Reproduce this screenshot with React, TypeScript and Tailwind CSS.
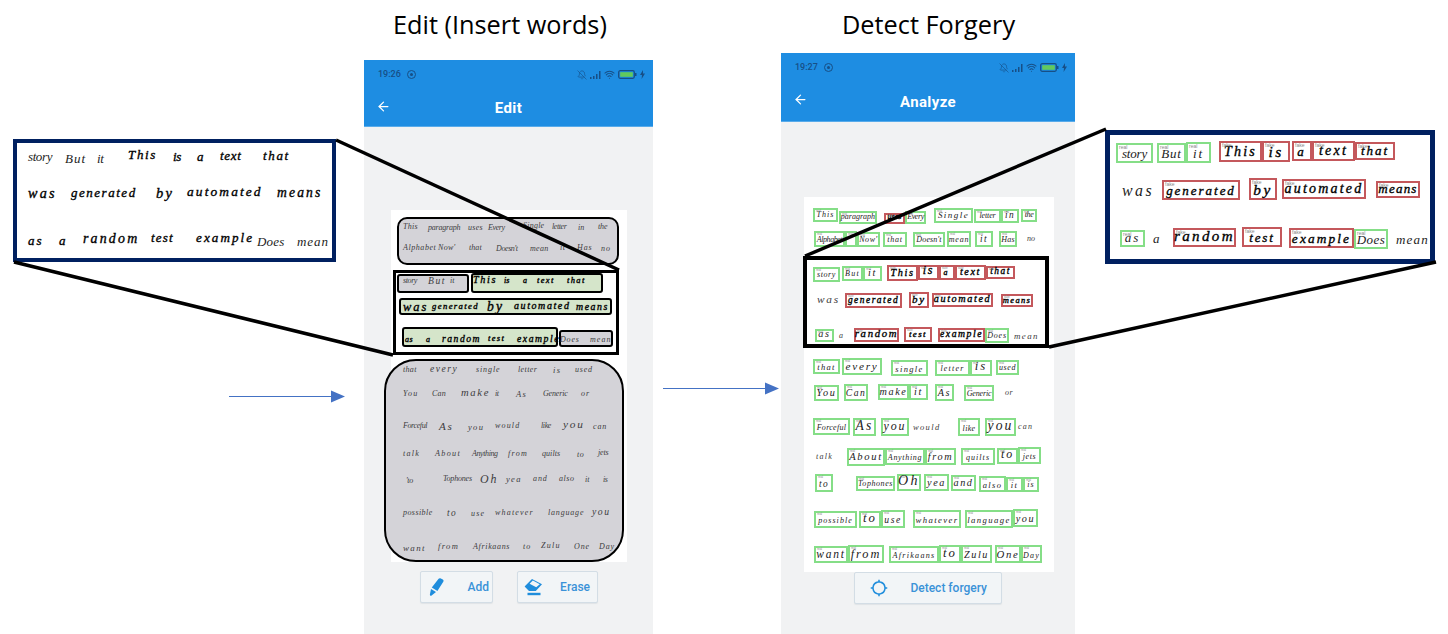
import { ArrowLeft, BellOff, Wifi } from "lucide-react";
import { MdGpsNotFixed } from "react-icons/md";

// text, left, right, centre y
type Plain = [string, number, number, number];
// text, left, right, top, bottom, state of the box
type Boxed = [string, number, number, number, number, "real" | "fake"];

const hand = "font-['Liberation_Serif',serif] italic";

const editTop: Plain[] = [
  ["This", 403, 418, 227], ["paragraph", 428, 457, 228], ["uses", 468, 483, 228], ["Every", 488, 502, 228],
  ["Single", 523, 545, 226], ["letter", 552, 570, 227], ["in", 578, 585, 228], ["the", 598, 608, 227],
  ["Alphabet", 403, 435, 248], ["Now'", 438, 453, 248], ["that", 469, 483, 248], ["Doesn't", 496, 517, 249],
  ["mean", 530, 545, 249], ["it", 560, 568, 248], ["Has", 577, 590, 248], ["no", 601, 610, 249],
];
const editReal: Plain[] = [
  ["story", 403, 415, 281], ["But", 428, 445, 281], ["it", 450, 457, 281], ["Does", 560, 577, 340], ["mean", 590, 608, 340],
];
const editFake: Plain[] = [
  ["This", 473, 497, 280], ["is", 504, 511, 281], ["a", 523, 530, 281], ["text", 537, 557, 280], ["that", 567, 587, 280],
  ["was", 403, 425, 307], ["generated", 432, 478, 306], ["by", 487, 503, 307], ["automated", 514, 567, 306], ["means", 576, 605, 307],
  ["as", 405, 413, 340], ["a", 426, 432, 340], ["random", 442, 476, 339], ["test", 488, 508, 338], ["example", 517, 557, 339],
];
const editBottom: Plain[] = [
  ["that", 403, 418, 370], ["every", 430, 458, 370], ["single", 476, 502, 370], ["letter", 518, 541, 370], ["is", 553, 563, 370], ["used", 575, 592, 370],
  ["You", 403, 417, 394], ["Can", 432, 443, 394], ["make", 461, 486, 393], ["it", 495, 500, 394], ["As", 516, 526, 394], ["Generic", 543, 566, 394], ["or", 581, 590, 394],
  ["Forceful", 403, 427, 426], ["As", 439, 452, 427], ["you", 468, 483, 427], ["would", 495, 518, 426], ["like", 541, 550, 426], ["you", 563, 583, 425], ["can", 593, 606, 427],
  ["talk", 403, 422, 454], ["About", 435, 459, 454], ["Anything", 472, 496, 454], ["from", 508, 527, 454], ["quilts", 542, 563, 454], ["to", 577, 585, 455], ["jets", 598, 611, 453],
  ["'to", 406, 415, 481], ["Tophones", 443, 469, 479], ["Oh", 480, 494, 480], ["yea", 506, 521, 479], ["and", 533, 546, 479], ["also", 559, 575, 479], ["it", 585, 592, 480], ["is", 603, 609, 480],
  ["possible", 403, 434, 513], ["to", 447, 458, 514], ["use", 471, 485, 514], ["whatever", 495, 532, 513], ["language", 548, 582, 513], ["you", 592, 609, 512],
  ["want", 403, 424, 548], ["from", 438, 458, 546], ["Afrikaans", 473, 510, 547], ["to", 523, 532, 547], ["Zulu", 541, 560, 546], ["One", 574, 587, 547], ["Day", 599, 612, 547],
];

const detectPlain: Plain[] = [
  ["no", 1027, 1034, 239], ["was", 817, 837, 300], ["a", 839, 845, 336], ["mean", 1014, 1035, 336], ["or", 1005, 1013, 393],
  ["would", 913, 938, 427], ["can", 1018, 1032, 427], ["talk", 816, 835, 457],
];
const detectBoxes: Boxed[] = [
  ["This", 813, 838, 208, 222, "real"], ["paragraph", 839, 877, 211, 224, "real"], ["uses", 884, 905, 213, 224, "fake"], ["Every", 905, 926, 211, 224, "real"],
  ["Single", 934, 973, 208, 223, "real"], ["letter", 974, 1001, 209, 223, "real"], ["in", 1001, 1019, 209, 223, "real"], ["the", 1021, 1037, 209, 222, "real"],
  ["Alphabet", 814, 845, 231, 247, "real"], ["'", 845, 857, 231, 247, "real"], ["Now'", 857, 880, 232, 247, "real"], ["that", 883, 907, 232, 247, "real"],
  ["Doesn't", 913, 945, 232, 247, "real"], ["mean", 947, 971, 231, 247, "real"], ["it", 975, 993, 231, 247, "real"], ["Has", 999, 1017, 231, 247, "real"],
  ["story", 813, 840, 267, 282, "real"], ["But", 842, 863, 266, 281, "real"], ["it", 863, 882, 266, 281, "real"],
  ["This", 887, 918, 265, 281, "fake"], ["is", 918, 939, 265, 280, "fake"], ["a", 939, 955, 265, 280, "fake"], ["text", 955, 986, 265, 280, "fake"], ["that", 986, 1015, 266, 279, "fake"],
  ["generated", 845, 902, 293, 308, "fake"], ["by", 909, 929, 292, 308, "fake"], ["automated", 932, 993, 293, 307, "fake"], ["means", 1001, 1033, 294, 307, "fake"],
  ["as", 815, 834, 329, 342, "real"], ["random", 854, 899, 328, 342, "fake"], ["test", 904, 932, 327, 342, "fake"], ["example", 938, 985, 328, 342, "fake"], ["Does", 985, 1009, 328, 343, "real"],
  ["that", 813, 840, 359, 374, "real"], ["every", 842, 882, 358, 375, "real"], ["single", 891, 928, 360, 376, "real"], ["letter", 935, 970, 360, 376, "real"], ["is", 970, 992, 360, 376, "real"], ["used", 996, 1019, 360, 375, "real"],
  ["You", 814, 839, 385, 401, "real"], ["Can", 844, 868, 384, 401, "real"], ["make", 878, 909, 384, 400, "real"], ["it", 909, 928, 384, 400, "real"], ["As", 935, 954, 384, 401, "real"], ["Generic", 964, 994, 385, 401, "real"],
  ["Forceful", 813, 850, 418, 435, "real"], ["As", 853, 876, 418, 436, "real"], ["you", 881, 909, 418, 436, "real"], ["like", 958, 980, 418, 436, "real"], ["you", 985, 1016, 418, 436, "real"],
  ["About", 847, 885, 448, 466, "real"], ["Anything", 885, 925, 448, 465, "real"], ["from", 925, 956, 448, 465, "real"], ["quilts", 961, 995, 448, 465, "real"], ["to", 997, 1018, 448, 464, "real"], ["jets", 1018, 1041, 447, 464, "real"],
  ["to", 815, 833, 474, 492, "real"], ["Tophones", 856, 895, 476, 491, "real"], ["Oh", 897, 921, 474, 491, "real"], ["yea", 924, 949, 474, 491, "real"], ["and", 951, 976, 475, 491, "real"], ["also", 979, 1006, 476, 492, "real"], ["it", 1006, 1023, 477, 492, "real"], ["is", 1023, 1039, 477, 492, "real"],
  ["possible", 814, 857, 511, 528, "real"], ["to", 859, 881, 511, 528, "real"], ["use", 881, 905, 510, 528, "real"], ["whatever", 913, 961, 510, 528, "real"], ["language", 965, 1013, 510, 528, "real"], ["you", 1013, 1038, 509, 527, "real"],
  ["want", 814, 848, 546, 563, "real"], ["from", 848, 884, 545, 563, "real"], ["Afrikaans", 889, 939, 546, 563, "real"], ["to", 939, 961, 545, 563, "real"], ["Zulu", 961, 992, 545, 563, "real"], ["One", 995, 1021, 545, 563, "real"], ["Day", 1021, 1042, 545, 563, "real"],
];

const leftInsetReal: Plain[] = [
  ["story", 28, 48, 156], ["But", 65, 85, 158], ["it", 97, 105, 158], ["Does", 257, 280, 241], ["mean", 297, 323, 241],
];
const leftInsetFake: Plain[] = [
  ["This", 128, 157, 154], ["is", 173, 183, 156], ["a", 197, 205, 156], ["text", 220, 245, 155], ["that", 263, 292, 155],
  ["was", 28, 53, 193], ["generated", 71, 135, 192], ["by", 156, 173, 193], ["automated", 187, 258, 192], ["means", 277, 317, 193],
  ["as", 28, 43, 240], ["a", 59, 68, 240], ["random", 83, 132, 239], ["test", 151, 178, 237], ["example", 196, 250, 238],
];

const rightInsetBoxes: Boxed[] = [
  ["story", 1116, 1153, 143, 163, "real"], ["But", 1157, 1186, 143, 163, "real"], ["it", 1186, 1211, 142, 163, "real"],
  ["This", 1219, 1262, 141, 162, "fake"], ["is", 1262, 1290, 141, 162, "fake"], ["a", 1292, 1312, 141, 161, "fake"], ["text", 1312, 1355, 141, 161, "fake"], ["that", 1355, 1395, 142, 160, "fake"],
  ["generated", 1162, 1240, 180, 200, "fake"], ["by", 1249, 1277, 178, 200, "fake"], ["automated", 1282, 1366, 179, 199, "fake"], ["means", 1376, 1420, 181, 198, "fake"],
  ["as", 1120, 1145, 230, 247, "real"], ["random", 1173, 1236, 228, 247, "fake"], ["test", 1242, 1282, 227, 247, "fake"], ["example", 1289, 1354, 228, 248, "fake"], ["Does", 1354, 1388, 229, 249, "real"],
];
const rightInsetPlain: Plain[] = [
  ["was", 1122, 1150, 191], ["a", 1153, 1162, 238], ["mean", 1396, 1423, 239],
];

const clamp = (v: number, lo: number, hi: number) => Math.max(lo, Math.min(hi, v));

// font size and tracking are worked out from the width the word has in the scan
const fit = (text: string, w: number, min: number, max: number) => {
  const fontSize = clamp((w / Math.max(text.length, 2)) * 1.7, min, max);
  const letterSpacing = clamp((w - 0.43 * fontSize * text.length) / text.length, -0.4, 3);
  return { fontSize, letterSpacing };
};

const inked = "[-webkit-text-stroke:0.35px_black] text-black";

const Word = ({ item, bold, faint, large }: { item: Plain; bold?: boolean; faint?: boolean; large?: boolean }) => {
  const [text, x1, x2, y] = item;
  return (
    <span
      className={`absolute -translate-y-1/2 leading-none whitespace-nowrap ${hand} ${bold ? inked : faint ? "text-[#3c3c40]" : "text-[#1c1c1c]"}`}
      style={{ left: x1, top: y, ...fit(text, x2 - x1, large ? 13 : 8, large ? 16 : 15) }}
    >
      {text}
    </span>
  );
};

const BoxedWord = ({ item, large }: { item: Boxed; large?: boolean }) => {
  const [text, x1, x2, y1, y2, state] = item;
  const fake = state === "fake";
  const pad = large ? 10 : 7;
  return (
    <div
      className={`absolute flex items-end justify-center border-2 pb-px ${fake ? "border-[#c4585c]" : "border-[#85de87]"}`}
      style={{ left: x1, top: y1, width: x2 - x1, height: y2 - y1 }}
    >
      <span className={`absolute left-px top-0 leading-none text-[#888] font-['Liberation_Sans',sans-serif] ${large ? "text-[5px]" : "text-[3px]"}`}>
        {state}
      </span>
      <span
        className={`leading-none whitespace-nowrap ${hand} ${fake ? inked : "text-[#1c1c1c]"}`}
        style={fit(text, x2 - x1 - pad, large ? 13 : 8, large ? 16 : 14)}
      >
        {text}
      </span>
    </div>
  );
};

const StatusBar = ({ time }: { time: string }) => (
  <div className="flex h-[25px] items-center justify-between pl-3.5 pr-2 pt-1 text-[#174f86]">
    <div className="flex items-center gap-1.5 font-['Roboto',sans-serif] text-[9px] font-medium">
      {time}
      <span className="flex size-[9px] items-center justify-center rounded-full border-[1.5px] border-[#174f86]">
        <span className="size-[3px] rounded-full bg-[#174f86]" />
      </span>
    </div>
    <div className="flex items-center gap-[3px]">
      <BellOff size={10} strokeWidth={1.5} />
      <svg width="11" height="8" viewBox="0 0 11 8" fill="currentColor">
        <rect x="0" y="6" width="1.5" height="2" />
        <rect x="3" y="5" width="1.5" height="3" />
        <rect x="6" y="3" width="1.5" height="5" />
        <rect x="9" y="0" width="1.5" height="8" />
      </svg>
      <Wifi size={11} strokeWidth={2.2} />
      <svg width="19" height="9" viewBox="0 0 19 9">
        <rect x="0.7" y="0.7" width="15.6" height="7.6" rx="1.5" fill="none" stroke="#174f86" strokeWidth="1.3" />
        <rect x="2.2" y="2.2" width="12.6" height="4.6" fill="#62c95d" />
        <rect x="17" y="3" width="1.5" height="3" fill="#174f86" />
      </svg>
      <svg width="5" height="9" viewBox="0 0 5 9" fill="currentColor">
        <path d="M3 0 0 5h2L1.6 9 5 3.6H3z" />
      </svg>
    </div>
  </div>
);

const Phone = ({ title, time, bar, children, className }: { title: string; time: string; bar: string; children: React.ReactNode; className: string }) => (
  <section className={`absolute flex flex-col bg-[#f1f2f3] ${className}`}>
    <header className="bg-[#1e8de2] border-b border-[#58abea] text-white">
      <StatusBar time={time} />
      <div className={`relative flex items-center justify-center pt-1.5 ${bar}`}>
        <ArrowLeft size={15} strokeWidth={2} className="absolute left-3 top-[14px]" />
        <h2 className="font-['Roboto',sans-serif] text-[15px] font-bold tracking-wide">{title}</h2>
      </div>
    </header>
    {children}
  </section>
);

const ActionButton = ({ icon, label, className }: { icon: React.ReactNode; label: string; className: string }) => (
  <button className={`flex h-[32px] items-center justify-between rounded-[2px] border border-[#d3dde5] bg-[#f2f5f7] shadow-[0_1px_1px_#dfe3e6] font-['Roboto',sans-serif] text-xs font-medium text-[#3a92d8] ${className}`}>
    {icon}
    {label}
  </button>
);

const PenIcon = () => (
  <svg width="15" height="18" viewBox="0 0 15 18" fill="#1f8ddc">
    <path d="M9.6 0.8C10.2 0 11 0 11.8 0.4L13.8 1.6C14.6 2.1 14.8 3 14.3 3.8L8.4 13 2.8 9.6z" />
    <path d="M2 11 7 14.1 2.6 17.4C1.8 18 0.8 17.4 0.9 16.4z" />
  </svg>
);

const EraserIcon = () => (
  <svg width="19" height="18" viewBox="0 0 19 18">
    <path d="M0.6 8.6 8 1 18 6.2 11.8 13H5z" fill="#1f8ddc" />
    <path d="M8.8 2.6 15.8 6.2 12.2 9.2 5.6 5.8z" fill="#f2f5f7" />
    <rect x="3.5" y="14.8" width="13" height="2.4" fill="#1f8ddc" />
  </svg>
);

const App = () => (
  <div className="relative h-[634px] w-[1448px] overflow-hidden bg-white font-['Open_Sans',sans-serif]">
    <h1 className="absolute left-[393px] top-[7px] text-[25.3px] leading-[34px] text-black">Edit (Insert words)</h1>
    <h1 className="absolute left-[842px] top-[7px] text-[25.3px] leading-[34px] text-black">Detect Forgery</h1>

    <Phone title="Edit" time="19:26" bar="h-[41px]" className="left-[364px] top-[60px] h-[574px] w-[289px]">
      <div className="mx-[27px] mt-[83px] flex h-[352px] w-[236px] flex-col bg-white pt-[7px]">
        <div className="ml-1.5 h-[48px] w-[222px] rounded-[10px] border-2 border-black bg-[#d4d3d8]" />
        <div className="ml-0.5 mt-[5px] h-[85px] w-[226px] border-[3px] border-black">
          <div className="ml-px flex items-end gap-0.5">
            <div className="h-[19px] w-[72px] rounded-[3px] border-2 border-black bg-[#d4d3d8]" />
            <div className="h-[20px] w-[132px] rounded-[3px] border-2 border-black bg-[#d5e5ca]" />
          </div>
          <div className="ml-[3px] mt-[5px] h-[17px] w-[213px] rounded-[3px] border-2 border-black bg-[#d5e5ca]" />
          <div className="ml-1.5 mt-3 flex items-end gap-px">
            <div className="h-[20px] w-[156px] rounded-[3px] border-2 border-black bg-[#d5e5ca]" />
            <div className="h-[17px] w-[54px] rounded-[3px] border-2 border-black bg-[#d4d3d8]" />
          </div>
        </div>
        <div className="-ml-[7px] mt-1 h-[204px] w-[240px] rounded-[32px] border-2 border-black bg-[#d4d3d8]" />
      </div>
      <div className="mt-[9px] flex gap-6 pl-14">
        <ActionButton icon={<PenIcon />} label="Add" className="w-[73px] pl-2 pr-[3px]" />
        <ActionButton icon={<EraserIcon />} label="Erase" className="w-[81px] pl-1.5 pr-[7px]" />
      </div>
    </Phone>

    <Phone title="Analyze" time="19:27" bar="h-[43px]" className="left-[781px] top-[53px] h-[581px] w-[294px]">
      <div className="ml-[23px] mt-[75px] h-[375px] w-[250px] bg-white" />
      <div className="flex pl-[73px]">
        <ActionButton
          icon={<MdGpsNotFixed size={18} color="#1f8ddc" />}
          label="Detect forgery"
          className="w-[148px] pl-[15px] pr-[14px]"
        />
      </div>
    </Phone>

    {editTop.map((w, i) => <Word key={i} item={w} faint />)}
    {editReal.map((w, i) => <Word key={i} item={w} faint />)}
    {editFake.map((w, i) => <Word key={i} item={w} bold />)}
    {editBottom.map((w, i) => <Word key={i} item={w} faint />)}

    {detectBoxes.map((b, i) => <BoxedWord key={i} item={b} />)}
    {detectPlain.map((w, i) => <Word key={i} item={w} faint />)}
    <div className="absolute left-[803px] top-[256px] h-[92px] w-[246px] border-4 border-black" />

    {/* magnified insets */}
    <div className="absolute left-[13px] top-[139px] h-[123px] w-[323px] border-4 border-[#002060] bg-white" />
    {leftInsetReal.map((w, i) => <Word key={i} item={w} large />)}
    {leftInsetFake.map((w, i) => <Word key={i} item={w} bold large />)}

    <div className="absolute left-[1105px] top-[130px] h-[134px] w-[330px] border-[5px] border-[#002060] bg-white" />
    {rightInsetBoxes.map((b, i) => <BoxedWord key={i} item={b} large />)}
    {rightInsetPlain.map((w, i) => <Word key={i} item={w} large />)}

    <svg className="pointer-events-none absolute inset-0" width="1448" height="634" viewBox="0 0 1448 634">
      <g stroke="#000" strokeWidth="3.5" fill="none">
        <path d="M336 140 619 270" />
        <path d="M14 262 393 355" />
        <path d="M805 256 1106 129" />
        <path d="M1049 347 1436 262" />
      </g>
      <g stroke="#4472c4" strokeWidth="1.2" fill="#4472c4">
        <path d="M229 396.5H334" />
        <path d="M345 396.5 331 390.5V402.5z" stroke="none" />
        <path d="M663 388.5H768" />
        <path d="M779 388.5 765 382.5V394.5z" stroke="none" />
      </g>
    </svg>
  </div>
);

export default App;
